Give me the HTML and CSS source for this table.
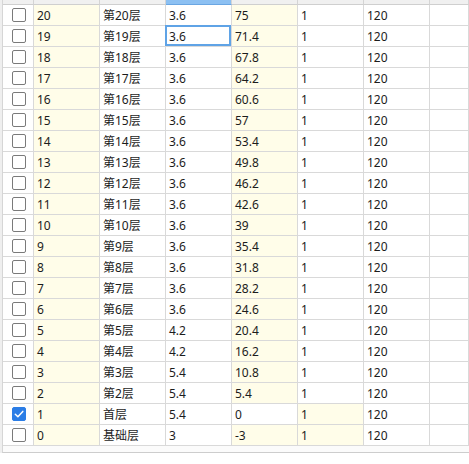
FILE: index.html
```html
<!DOCTYPE html>
<html lang="zh-CN">
<head>
<meta charset="utf-8">
<title>楼层表</title>
<link rel="stylesheet" href="styles.css">
</head>
<body>
<div class="grid">
  <div class="row head">
    <div class="hc"></div>
    <div class="hc"><span>层号</span></div>
    <div class="hc"><span>层名</span></div>
    <div class="hc sel"><span>层高(m)</span></div>
    <div class="hc"><span>底标高(m)</span></div>
    <div class="hc"><span>标准层号</span></div>
    <div class="hc"><span>墙厚(mm)</span></div>
    <div class="hc"></div>
  </div>

  <div class="row"><div class="c ck"><span class="box"></span></div><div class="c y">20</div><div class="c">第20层</div><div class="c">3.6</div><div class="c y">75</div><div class="c">1</div><div class="c">120</div><div class="c"></div></div>
  <div class="row"><div class="c ck"><span class="box"></span></div><div class="c y">19</div><div class="c">第19层</div><div class="c cur">3.6</div><div class="c y">71.4</div><div class="c">1</div><div class="c">120</div><div class="c"></div></div>
  <div class="row"><div class="c ck"><span class="box"></span></div><div class="c y">18</div><div class="c">第18层</div><div class="c">3.6</div><div class="c y">67.8</div><div class="c">1</div><div class="c">120</div><div class="c"></div></div>
  <div class="row"><div class="c ck"><span class="box"></span></div><div class="c y">17</div><div class="c">第17层</div><div class="c">3.6</div><div class="c y">64.2</div><div class="c">1</div><div class="c">120</div><div class="c"></div></div>
  <div class="row"><div class="c ck"><span class="box"></span></div><div class="c y">16</div><div class="c">第16层</div><div class="c">3.6</div><div class="c y">60.6</div><div class="c">1</div><div class="c">120</div><div class="c"></div></div>
  <div class="row"><div class="c ck"><span class="box"></span></div><div class="c y">15</div><div class="c">第15层</div><div class="c">3.6</div><div class="c y">57</div><div class="c">1</div><div class="c">120</div><div class="c"></div></div>
  <div class="row"><div class="c ck"><span class="box"></span></div><div class="c y">14</div><div class="c">第14层</div><div class="c">3.6</div><div class="c y">53.4</div><div class="c">1</div><div class="c">120</div><div class="c"></div></div>
  <div class="row"><div class="c ck"><span class="box"></span></div><div class="c y">13</div><div class="c">第13层</div><div class="c">3.6</div><div class="c y">49.8</div><div class="c">1</div><div class="c">120</div><div class="c"></div></div>
  <div class="row"><div class="c ck"><span class="box"></span></div><div class="c y">12</div><div class="c">第12层</div><div class="c">3.6</div><div class="c y">46.2</div><div class="c">1</div><div class="c">120</div><div class="c"></div></div>
  <div class="row"><div class="c ck"><span class="box"></span></div><div class="c y">11</div><div class="c">第11层</div><div class="c">3.6</div><div class="c y">42.6</div><div class="c">1</div><div class="c">120</div><div class="c"></div></div>
  <div class="row"><div class="c ck"><span class="box"></span></div><div class="c y">10</div><div class="c">第10层</div><div class="c">3.6</div><div class="c y">39</div><div class="c">1</div><div class="c">120</div><div class="c"></div></div>
  <div class="row"><div class="c ck"><span class="box"></span></div><div class="c y">9</div><div class="c">第9层</div><div class="c">3.6</div><div class="c y">35.4</div><div class="c">1</div><div class="c">120</div><div class="c"></div></div>
  <div class="row"><div class="c ck"><span class="box"></span></div><div class="c y">8</div><div class="c">第8层</div><div class="c">3.6</div><div class="c y">31.8</div><div class="c">1</div><div class="c">120</div><div class="c"></div></div>
  <div class="row"><div class="c ck"><span class="box"></span></div><div class="c y">7</div><div class="c">第7层</div><div class="c">3.6</div><div class="c y">28.2</div><div class="c">1</div><div class="c">120</div><div class="c"></div></div>
  <div class="row"><div class="c ck"><span class="box"></span></div><div class="c y">6</div><div class="c">第6层</div><div class="c">3.6</div><div class="c y">24.6</div><div class="c">1</div><div class="c">120</div><div class="c"></div></div>
  <div class="row"><div class="c ck"><span class="box"></span></div><div class="c y">5</div><div class="c">第5层</div><div class="c">4.2</div><div class="c y">20.4</div><div class="c">1</div><div class="c">120</div><div class="c"></div></div>
  <div class="row"><div class="c ck"><span class="box"></span></div><div class="c y">4</div><div class="c">第4层</div><div class="c">4.2</div><div class="c y">16.2</div><div class="c">1</div><div class="c">120</div><div class="c"></div></div>
  <div class="row"><div class="c ck"><span class="box"></span></div><div class="c y">3</div><div class="c">第3层</div><div class="c">5.4</div><div class="c y">10.8</div><div class="c">1</div><div class="c">120</div><div class="c"></div></div>
  <div class="row"><div class="c ck"><span class="box"></span></div><div class="c y">2</div><div class="c">第2层</div><div class="c">5.4</div><div class="c y">5.4</div><div class="c">1</div><div class="c">120</div><div class="c"></div></div>
  <div class="row"><div class="c ck"><span class="box on"><svg viewBox="0 0 14 14" width="14" height="14"><path d="M3.3 7.2 L5.9 9.7 L10.8 4.4" fill="none" stroke="#fff" stroke-width="1.5" stroke-linecap="round" stroke-linejoin="round"/></svg></span></div><div class="c y">1</div><div class="c">首层</div><div class="c">5.4</div><div class="c">0</div><div class="c y">1</div><div class="c">120</div><div class="c"></div></div>
  <div class="row"><div class="c ck"><span class="box"></span></div><div class="c y">0</div><div class="c">基础层</div><div class="c">3</div><div class="c y">-3</div><div class="c y">1</div><div class="c">120</div><div class="c"></div></div>

  <div class="foot"></div>
</div>
</body>
</html>
```

FILE: styles.css
```css
* { box-sizing: border-box; }

html, body {
  margin: 0;
  padding: 0;
  background: #ffffff;
}

body {
  width: 469px;
  height: 464px;
  overflow: hidden;
  font-family: "Noto Sans", "Noto Sans CJK SC", sans-serif;
  font-size: 12px;
  color: #1c1c1c;
}

.grid {
  width: 469px;
  border-left: 2px solid #efefef;
}

.row {
  display: grid;
  grid-template-columns: 31px repeat(6, 66px) 1fr;
  height: 21px;
  border-left: 1px solid #d6d6d6;
}

.row.head {
  height: 5px;
}

.hc {
  height: 5px;
  background: #f0f0f0;
  border-right: 1px solid #d4d4d4;
  border-bottom: 1px solid #cfcfcf;
  overflow: hidden;
  display: flex;
  justify-content: center;
  align-items: flex-end;
}

.hc span {
  display: block;
  line-height: 14px;
  white-space: nowrap;
  color: #555;
  margin-bottom: 4px;
}

.hc.sel {
  background: #8cc0f2;
  border-bottom-color: #6aa6e2;
}

.c {
  position: relative;
  height: 21px;
  border-right: 1px solid #d9d9d9;
  border-bottom: 1px solid #d9d9d9;
  padding: 1px 0 0 3px;
  line-height: 19px;
  white-space: nowrap;
  overflow: visible;
}

.c.y {
  background: #fffde9;
}

.c.ck {
  padding: 0;
  display: flex;
  align-items: center;
  justify-content: center;
}

.box {
  display: block;
  width: 14px;
  height: 14px;
  border: 1px solid #7a7a7a;
  border-radius: 2px;
  background: #fff;
  margin-left: 1px;
}

.box.on {
  background: #2b7de6;
  border-color: #2b7de6;
  position: relative;
}

.box.on svg {
  display: block;
  margin: -1px 0 0 -1px;
}

.c.cur::after {
  content: "";
  position: absolute;
  left: -1px;
  top: -1px;
  right: 0;
  bottom: 0;
  border: 2px solid #5fa3e6;
  pointer-events: none;
}

.foot {
  height: 7px;
  border-left: 1px solid #d6d6d6;
  border-bottom: 1px solid #cdcdcd;
  background: #fbfbfb;
}
```
